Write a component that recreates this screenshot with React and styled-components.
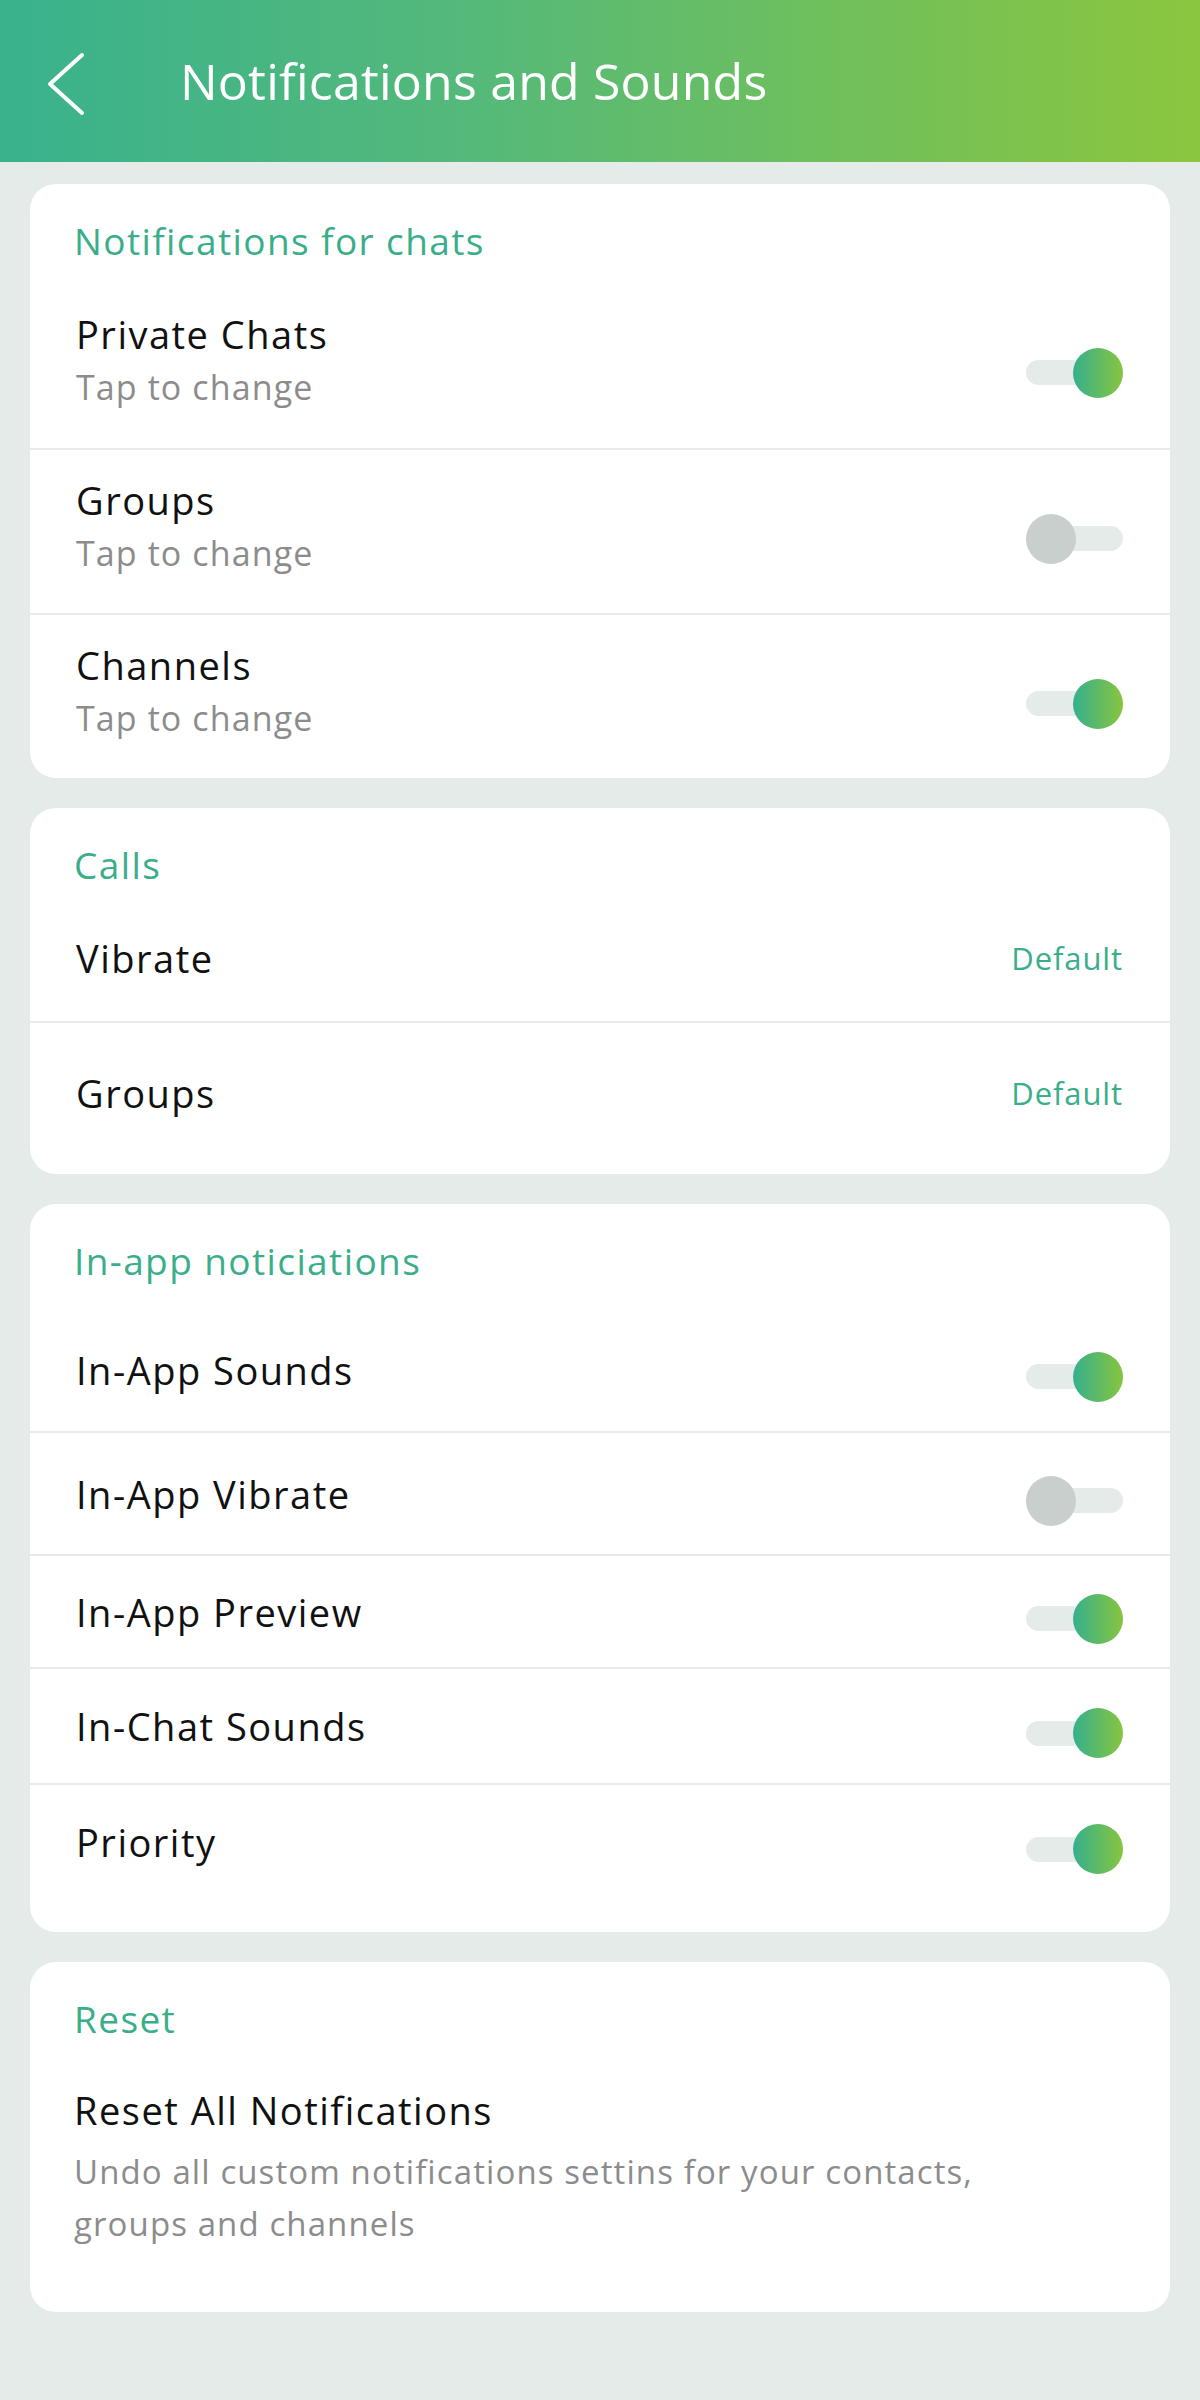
import styled, { createGlobalStyle } from "styled-components";

const GlobalStyle = createGlobalStyle`
    body {
        margin: 0;
        background: #e4ebe9;
        font-family: "Open Sans", "Noto Sans", sans-serif;
    }
`

const Page = styled.div`
    min-height: 2400px;
    background: #e4ebe9;
    padding-bottom: 40px;
`

const Header = styled.header`
    height: 162px;
    display: flex;
    align-items: center;
    padding-left: 46px;
    background: linear-gradient(90deg, #39b28d 0%, #55b979 40%, #8bc63e 100%);
    color: #fff;
`

const Back = styled.button`
    background: none;
    border: none;
    padding: 0;
    width: 40px;
    height: 64px;
    margin-top: 6px;
    cursor: pointer;
`

const Title = styled.h1`
    margin: 0 0 0 94px;
    font-size: 50px;
    font-weight: 400;
    letter-spacing: 0.2px;
`

const List = styled.main`
    display: flex;
    flex-direction: column;
    gap: 30px;
    padding: 22px 30px 0;
`

const Card = styled.section`
    background: #fff;
    border-radius: 26px;
    padding: 35px 0 ${(p) => p.$bottom || 0}px;
    overflow: hidden;
`

const SectionTitle = styled.h2`
    margin: 0 0 ${(p) => p.$gap || 0}px;
    padding: 0 44px;
    font-size: 37px;
    line-height: 44px;
    font-weight: 400;
    letter-spacing: 1.4px;
    color: #3aae8a;
`

const Row = styled.div`
    display: flex;
    align-items: center;
    justify-content: space-between;
    box-sizing: border-box;
    height: ${(p) => p.$h}px;
    padding: ${(p) => p.$pt || 0}px 47px ${(p) => p.$pb || 0}px 46px;
    & + & {
        border-top: 2px solid #e7ebeb;
    }
`

const Texts = styled.div`
    display: flex;
    flex-direction: column;
`

const Label = styled.span`
    font-size: 38px;
    line-height: 52px;
    letter-spacing: 1.5px;
    color: #111;
`

const Sub = styled.span`
    font-size: 34px;
    line-height: 54px;
    letter-spacing: 1.1px;
    color: #8c8c8c;
`

const Value = styled.span`
    font-size: 31px;
    letter-spacing: 0.9px;
    color: #3aae8a;
`

const Track = styled.div`
    position: relative;
    width: 97px;
    height: 25px;
    border-radius: 13px;
    background: #e5ebe9;
    margin-top: ${(p) => p.$shift || 0}px;
    cursor: pointer;

    &::after {
        content: "";
        position: absolute;
        top: -12.5px;
        left: ${(p) => (p.$on ? "47px" : "0")};
        width: 50px;
        height: 50px;
        border-radius: 50%;
        background: ${(p) => (p.$on ? "linear-gradient(90deg, #35b08c, #88c53e)" : "#c8cfcd")};
    }
`

const ResetBody = styled.div`
    padding: 43px 44px 0;
`

const Desc = styled.p`
    margin: 10px 0 0;
    font-size: 33px;
    line-height: 52px;
    letter-spacing: 1.1px;
    color: #8c8c8c;
    max-width: 960px;
`

const chats = [
    { label: "Private Chats", on: true },
    { label: "Groups", on: false },
    { label: "Channels", on: true },
]

const inApp = [
    { label: "In-App Sounds", on: true, h: 123 },
    { label: "In-App Vibrate", on: false, h: 123 },
    { label: "In-App Preview", on: true, h: 113 },
    { label: "In-Chat Sounds", on: true, h: 116 },
    { label: "Priority", on: true, h: 116 },
]

const Chevron = () => (
    <svg width="40" height="64" viewBox="0 0 40 64">
        <polyline points="36,3 4,32 36,61" fill="none" stroke="#fff" strokeWidth="4" strokeLinecap="round" strokeLinejoin="round" />
    </svg>
)

const App = () => {
    return (
        <Page>
            <GlobalStyle />
            <Header>
                <Back aria-label="back"><Chevron /></Back>
                <Title>Notifications and Sounds</Title>
            </Header>
            <List>
                <Card>
                    <SectionTitle $gap={20}>Notifications for chats</SectionTitle>
                    {chats.map((c) => (
                        <Row key={c.label} $h={165} $pt={20} $pb={30}>
                            <Texts>
                                <Label>{c.label}</Label>
                                <Sub>Tap to change</Sub>
                            </Texts>
                            <Track $on={c.on} $shift={24} />
                        </Row>
                    ))}
                </Card>

                <Card $bottom={19}>
                    <SectionTitle>Calls</SectionTitle>
                    <Row $h={134} $pt={8}>
                        <Label>Vibrate</Label>
                        <Value>Default</Value>
                    </Row>
                    <Row $h={134} $pt={8}>
                        <Label>Groups</Label>
                        <Value>Default</Value>
                    </Row>
                </Card>

                <Card $bottom={33}>
                    <SectionTitle $gap={25}>In-app noticiations</SectionTitle>
                    {inApp.map((c) => (
                        <Row key={c.label} $h={c.h}>
                            <Label>{c.label}</Label>
                            <Track $on={c.on} $shift={14} />
                        </Row>
                    ))}
                </Card>

                <Card $bottom={62}>
                    <SectionTitle>Reset</SectionTitle>
                    <ResetBody>
                        <Label>Reset All Notifications</Label>
                        <Desc>Undo all custom notifications settins for your contacts, groups and channels</Desc>
                    </ResetBody>
                </Card>
            </List>
        </Page>
    );
}

export default App;
